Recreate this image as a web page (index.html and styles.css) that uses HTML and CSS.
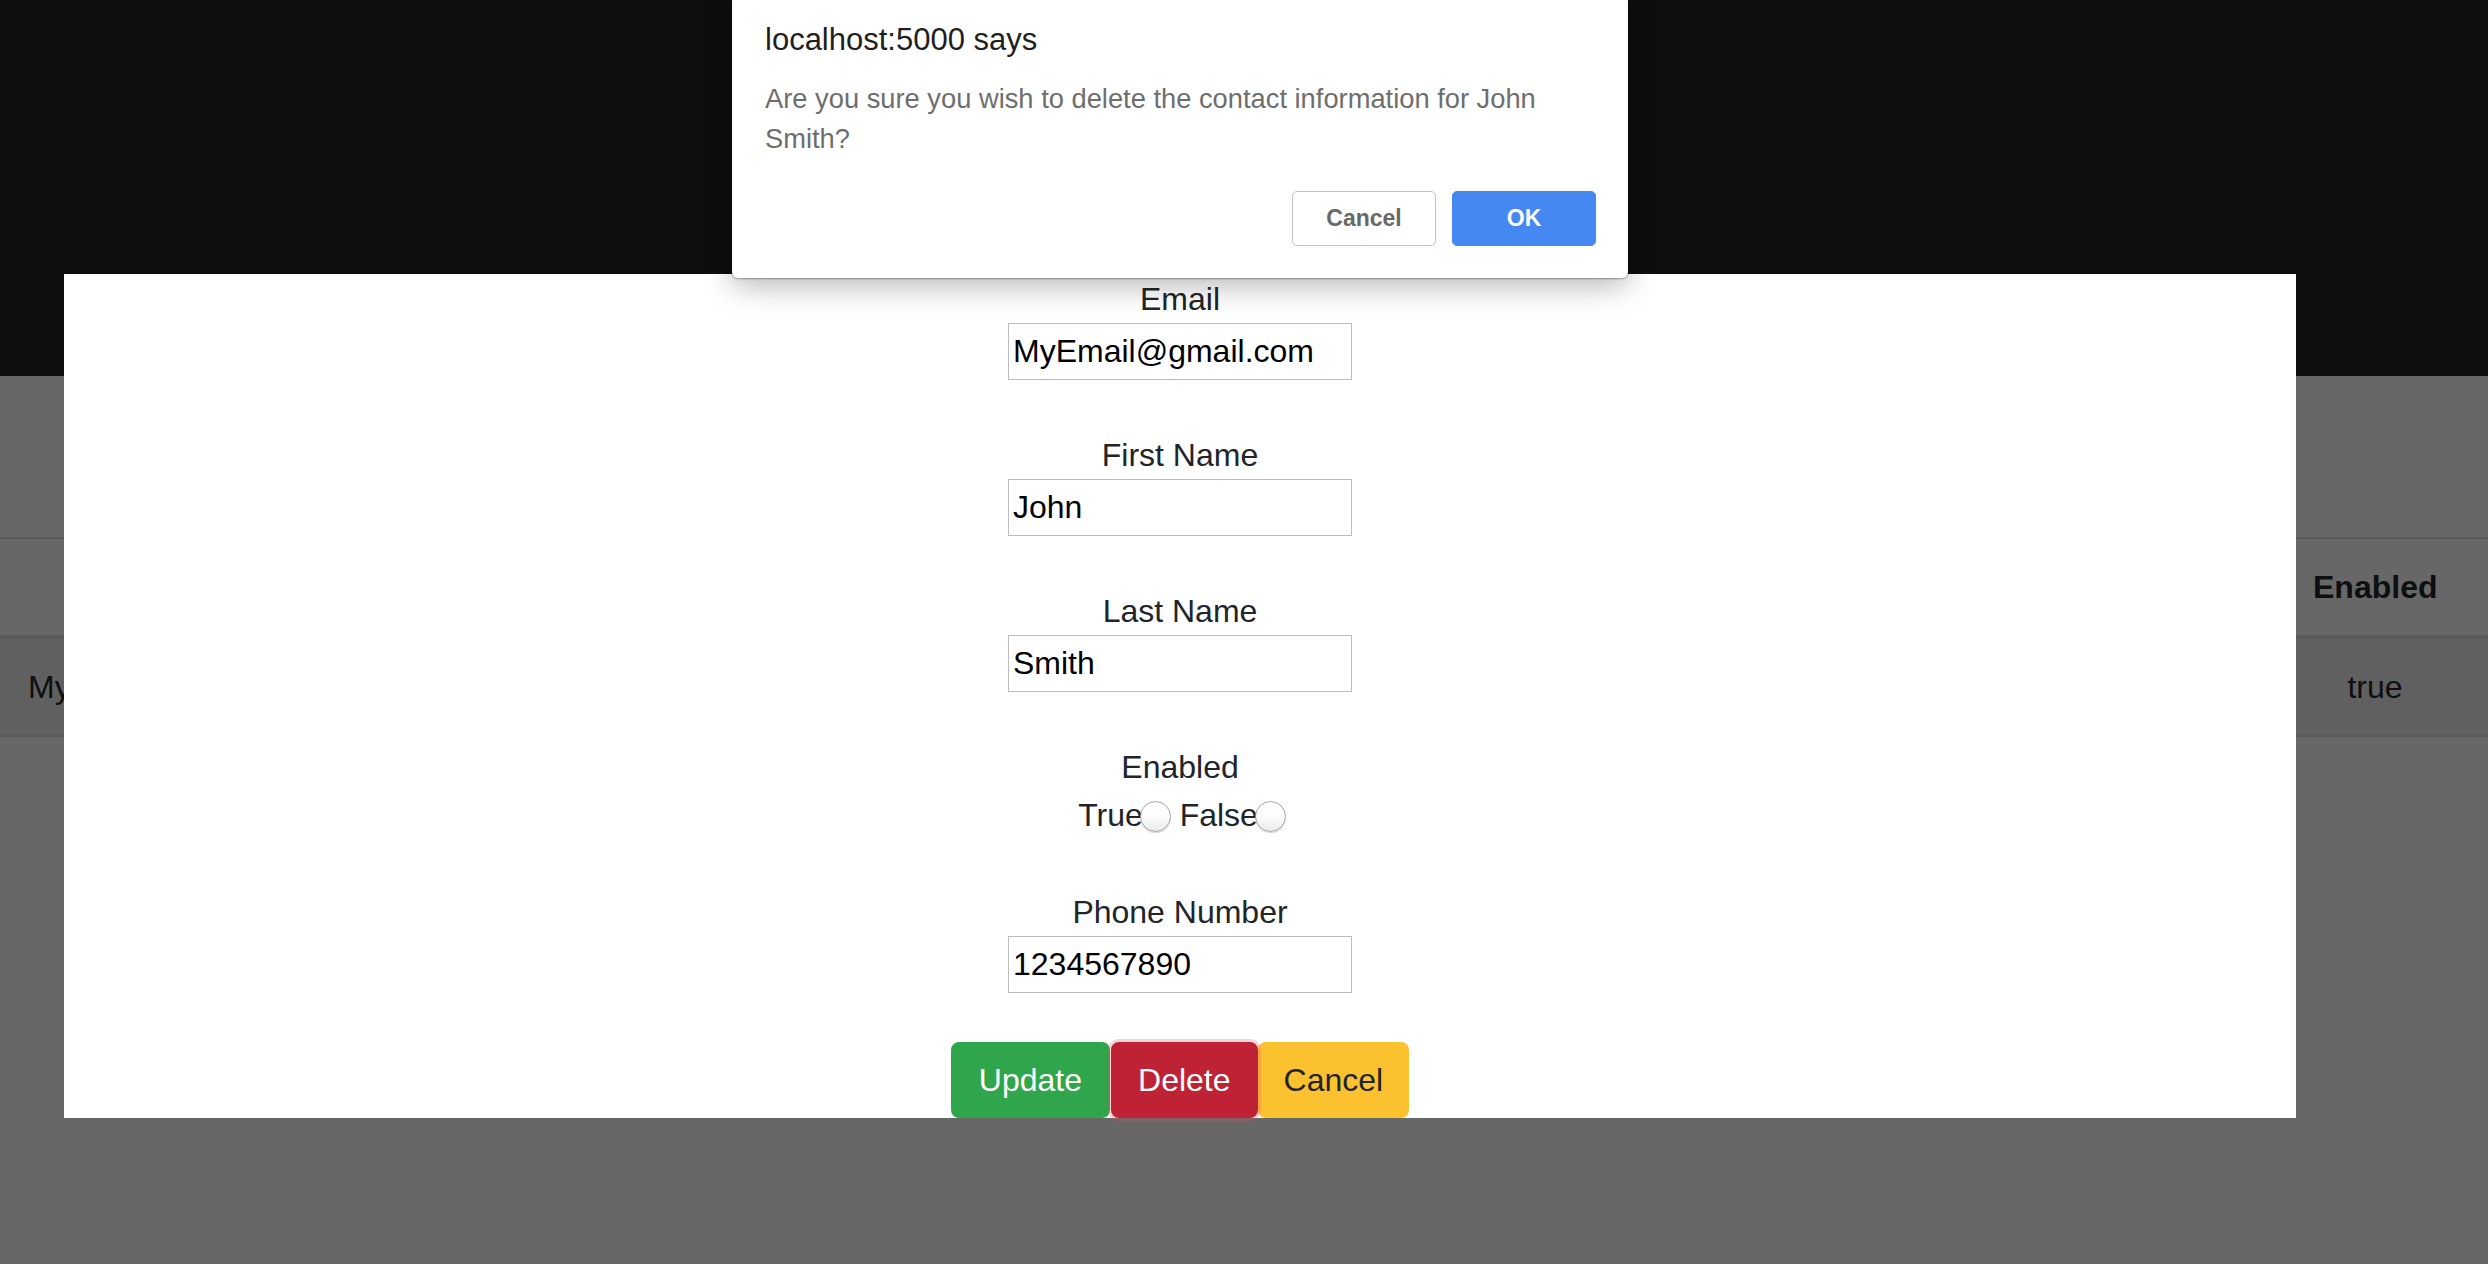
FILE: index.html
```html
<!DOCTYPE html>
<html lang="en">
<head>
<meta charset="utf-8">
<title>Contacts</title>
<link rel="stylesheet" href="styles.css">
</head>
<body>
<div class="page">
  <header class="navbar"></header>
  <main class="content">
    <table class="contacts">
      <colgroup>
        <col class="col-email">
        <col>
        <col>
        <col>
        <col class="col-enabled">
      </colgroup>
      <thead>
        <tr><th>Email</th><th>First Name</th><th>Last Name</th><th>Phone Number</th><th>Enabled</th></tr>
      </thead>
      <tbody>
        <tr><td>MyEmail@gmail.com</td><td>John</td><td>Smith</td><td>1234567890</td><td>true</td></tr>
      </tbody>
    </table>
  </main>
</div>

<div class="modal">
  <form class="edit-form">
    <div class="field">
      <label class="field-label" for="email">Email</label>
      <input class="field-input" id="email" type="text" value="MyEmail@gmail.com">
    </div>
    <div class="field">
      <label class="field-label" for="first">First Name</label>
      <input class="field-input" id="first" type="text" value="John">
    </div>
    <div class="field">
      <label class="field-label" for="last">Last Name</label>
      <input class="field-input" id="last" type="text" value="Smith">
    </div>
    <div class="field field-radio">
      <span class="field-label">Enabled</span>
      <div class="radio-row">True<input class="radio" type="radio" name="enabled"> False<input class="radio" type="radio" name="enabled"></div>
    </div>
    <div class="field field-last">
      <label class="field-label" for="phone">Phone Number</label>
      <input class="field-input" id="phone" type="text" value="1234567890">
    </div>
    <div class="actions">
      <button type="button" class="btn btn-update">Update</button><button type="button" class="btn btn-delete">Delete</button><button type="button" class="btn btn-cancel">Cancel</button>
    </div>
  </form>
</div>

<div class="alert-dialog">
  <div class="alert-title">localhost:5000 says</div>
  <div class="alert-message">Are you sure you wish to delete the contact information for John Smith?</div>
  <div class="alert-actions">
    <button type="button" class="alert-btn alert-cancel">Cancel</button>
    <button type="button" class="alert-btn alert-ok">OK</button>
  </div>
</div>
</body>
</html>
```

FILE: styles.css
```css
html, body {
  margin: 0;
  padding: 0;
}

body {
  width: 2488px;
  height: 1264px;
  overflow: hidden;
  background: #676767;
  font-family: "Liberation Sans", Arial, sans-serif;
  position: relative;
}

.page {
  display: flex;
  flex-direction: column;
  height: 100%;
}

.navbar {
  height: 376px;
  background: #0e0e0e;
  flex: none;
}

.content {
  flex: 1;
  background: #676767;
  padding-top: 161px;
}

.contacts {
  width: 100%;
  table-layout: fixed;
  border-collapse: collapse;
  font-size: 32px;
  line-height: 48px;
  color: #0d0f10;
  text-align: center;
}

.col-email { width: 353px; }
.col-enabled { width: 199px; }

.contacts th,
.contacts td {
  padding: 24px;
  white-space: nowrap;
  overflow: hidden;
}

.contacts th:first-child,
.contacts td:first-child {
  padding-left: 28px;
}

.contacts th:last-child,
.contacts td:last-child {
  padding-right: 51px;
}

.contacts th {
  font-weight: bold;
  border-top: 2px solid #5a5a5a;
  border-bottom: 4px solid #5a5a5a;
}

.contacts td {
  border-bottom: 2px solid #5a5a5a;
  background: #606060;
}

/* Edit modal */
.modal {
  position: absolute;
  left: 64px;
  top: 274px;
  width: 2232px;
  background: #ffffff;
  padding-top: 1px;
}

.edit-form {
  display: flex;
  flex-direction: column;
  align-items: center;
  margin: 0;
}

.field {
  display: flex;
  flex-direction: column;
  align-items: center;
  margin-bottom: 51px;
}

.field-radio {
  margin-bottom: 49px;
}

.field-last {
  margin-bottom: 49px;
}

.field-label {
  display: block;
  font-size: 32px;
  line-height: 48px;
  color: #212529;
}

.field-input {
  box-sizing: border-box;
  width: 344px;
  height: 57px;
  margin: 0;
  padding: 0 4px;
  border: 1px solid #bcbcbc;
  border-radius: 0;
  font-family: "Liberation Sans", Arial, sans-serif;
  font-size: 32px;
  color: #000000;
  background: #ffffff;
  outline: none;
}

.radio-row {
  font-size: 32px;
  line-height: 48px;
  height: 48px;
  color: #212529;
  white-space: nowrap;
  padding-left: 4px;
}

.radio {
  -webkit-appearance: none;
  appearance: none;
  box-sizing: border-box;
  width: 31px;
  height: 31px;
  margin: 0 0 0 -3px;
  border: 1px solid #a6a6a6;
  border-radius: 50%;
  background: linear-gradient(#ffffff 40%, #ececec);
  box-shadow: 0 1px 1px rgba(0, 0, 0, 0.18);
  vertical-align: middle;
  position: relative;
  top: -1px;
}

.actions {
  display: flex;
  justify-content: center;
}

.btn {
  box-sizing: border-box;
  height: 76px;
  margin: 0;
  padding: 12px 24px;
  border: 2px solid transparent;
  border-radius: 8px;
  font-family: "Liberation Sans", Arial, sans-serif;
  font-size: 32px;
  line-height: 48px;
  cursor: pointer;
}

.btn-update {
  background: #2fa64c;
  border-color: #2fa64c;
  color: #ffffff;
  padding: 12px 26px;
}

.btn-delete {
  background: #be2234;
  border-color: #be2234;
  color: #ffffff;
  margin-left: 1px;
  padding: 12px 25px;
  box-shadow: 0 0 0 3px rgba(225, 83, 97, 0.25);
  position: relative;
  z-index: 1;
}

.btn-cancel {
  background: #fcc12e;
  border-color: #fcc12e;
  color: #212529;
}

/* Browser alert dialog */
.alert-dialog {
  position: absolute;
  left: 732px;
  top: 0;
  width: 896px;
  height: 278px;
  box-sizing: border-box;
  padding: 20px 32px 32px 33px;
  background: #ffffff;
  border-radius: 0 0 6px 6px;
  box-shadow: 0 1px 2px rgba(0, 0, 0, 0.35), 0 8px 30px rgba(0, 0, 0, 0.28);
  z-index: 10;
  display: flex;
  flex-direction: column;
}

.alert-title {
  font-size: 31px;
  line-height: 40px;
  color: #1f1f1f;
}

.alert-message {
  margin-top: 19px;
  font-size: 27.3px;
  line-height: 40px;
  color: #6e6e6e;
}

.alert-actions {
  margin-top: auto;
  display: flex;
  justify-content: flex-end;
  gap: 16px;
}

.alert-btn {
  box-sizing: border-box;
  width: 144px;
  height: 55px;
  margin: 0;
  border-radius: 5px;
  font-family: "Liberation Sans", Arial, sans-serif;
  font-size: 23px;
  font-weight: bold;
  cursor: pointer;
}

.alert-cancel {
  background: #ffffff;
  border: 1px solid #c4c4c4;
  color: #686868;
}

.alert-ok {
  background: #4688f1;
  border: 1px solid #4688f1;
  color: #ffffff;
}
```
